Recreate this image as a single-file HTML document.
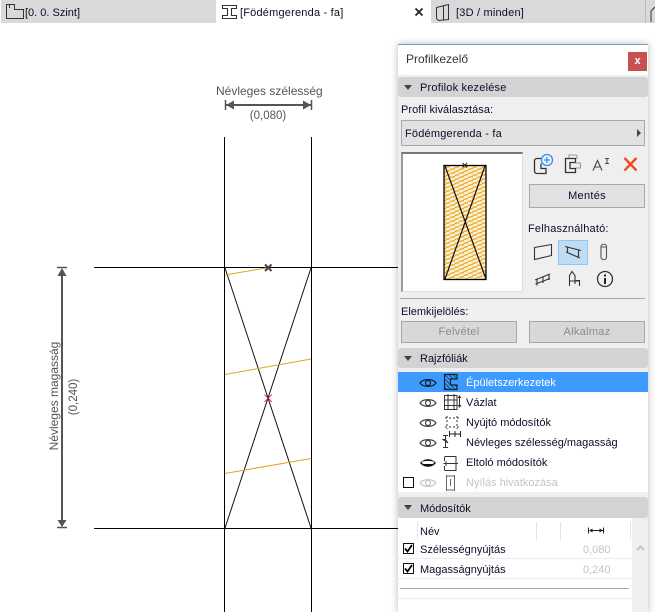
<!DOCTYPE html>
<html><head><meta charset="utf-8">
<style>
html,body{margin:0;padding:0;background:#fff}
#r{position:relative;width:655px;height:612px;overflow:hidden;background:#fff;font-family:"Liberation Sans",sans-serif;font-size:11px;color:#100a28}
.a{position:absolute}
.t{position:absolute;white-space:nowrap;line-height:14px}
.h{position:absolute;left:398px;width:250px;background:#d3d3d3;border-radius:3px}
.tri{position:absolute;left:404px;width:0;height:0;border-left:4px solid transparent;border-right:4px solid transparent;border-top:5px solid #444}
.btn{position:absolute;box-sizing:border-box;border:1px solid #a8a8a8;background:#e1e1e1;text-align:center;line-height:20px}
svg{position:absolute;overflow:visible}
</style></head><body><div id="r">
<div class="a" style="left:1px;top:0;width:215px;height:23px;background:#d9d9d9"></div>
<div class="a" style="left:431px;top:0;width:224px;height:23px;background:#d9d9d9"></div>
<div class="a" style="left:645px;top:0;width:1px;height:23px;background:#bbb"></div>
<div class="t" style="left:25px;top:6px">[0. 0. Szint]</div>
<div class="t" style="left:240px;top:6px;letter-spacing:.2px">[Födémgerenda - fa]</div>
<div class="t" style="left:456px;top:6px;letter-spacing:.2px">[3D / minden]</div>
<svg style="left:0;top:0" width="655" height="30" fill="none" stroke="#333" stroke-width="1">
<path d="M6.500 18.500V4.500H14.500V9.500H23.500V18.500Z"/><path d="M9.500 5V8"/>
<path d="M222.500 5.500H236.500V8.500H231.500V15.500H236.500V18.500H222.500V15.500H227.500V8.500H222.500Z" stroke-width="1.100"/>
<path d="M436.500 7.500L448.500 4.500V19.500L438.500 20.500L436.500 18.500ZM443.500 5.500V19.500"/>
<path d="M415.500 8.500L422.500 15.500M422.500 8.500L415.500 15.500" stroke="#222" stroke-width="1.800"/>
<path d="M651 11L655 7M651 11V22"/>
</svg>

<!-- drawing -->
<div class="t" style="left:216px;top:84px;font-size:12px;color:#555;width:105px;text-align:center">Névleges szélesség</div>
<div class="t" style="left:218px;top:109px;font-size:11.500px;color:#555;width:100px;text-align:center">(0,080)</div>
<svg style="left:0;top:0" width="655" height="612" fill="none">
<path d="M226 105H311" stroke="#555" stroke-width="2"/>
<path d="M225.500 100V110M311.500 100V110" stroke="#555" stroke-width="1.500"/>
<path d="M226 105L234 100.500V109.500Z M311 105L303 100.500V109.500Z" fill="#555"/>
<path d="M62 270V526" stroke="#555" stroke-width="2"/>
<path d="M57 267.500H67M57 527.500H67" stroke="#555" stroke-width="1.500"/>
<path d="M62 268L57.500 276H66.500Z M62 527L57.500 520H66.500Z" fill="#555"/>
<path d="M224.500 137V612M311.500 137V612M94 267.500H398M94 528.500H398" stroke="#000" stroke-width="1"/>
<path d="M225 268L311 528M311 268L225 528" stroke="#111" stroke-width="1"/>
<path d="M225 275L266 268M225 374.500L311 359M225 473.500L311 458.500" stroke="#e0a520" stroke-width="1"/>
<path d="M265 264.500L271.500 271M271.500 264.500L265 271" stroke="#444" stroke-width="2"/>
<path d="M264.500 394.500L272 402M272 394.500L264.500 402" stroke="#e01030" stroke-width=".8"/>
</svg>
<div class="t" style="left:-6px;top:389px;font-size:12px;color:#555;width:120px;text-align:center;transform:rotate(-90deg)">Névleges magasság</div>
<div class="t" style="left:34px;top:390px;font-size:11.500px;color:#555;width:80px;text-align:center;transform:rotate(-90deg)">(0,240)</div>

<!-- panel -->
<div class="a" style="left:398px;top:44px;width:250px;height:568px;background:#efefef;border-top:1px solid #7f9db9;box-sizing:border-box;box-shadow:0 0 7px rgba(0,0,0,.28)"></div>
<div class="a" style="left:398px;top:45px;width:250px;height:30px;background:#fff"></div>
<div class="t" style="left:406px;top:52px;font-size:12px;color:#333">Profilkezelő</div>
<div class="a" style="left:628px;top:52px;width:19px;height:19px;background:#c75050;color:#fff;text-align:center;font:bold 11px/18px 'Liberation Sans',sans-serif">x</div>

<div class="h" style="top:77px;height:20px"></div><div class="tri" style="top:85px"></div>
<div class="t" style="left:420px;top:81px;letter-spacing:.2px">Profilok kezelése</div>
<div class="t" style="left:401px;top:103px;letter-spacing:.05px">Profil kiválasztása:</div>
<div class="a" style="left:401px;top:120px;width:244px;height:26px;box-sizing:border-box;border:1px solid #a8a8a8;background:#e1e1e1"></div>
<div class="t" style="left:405px;top:127px;letter-spacing:.2px">Födémgerenda - fa</div>
<div class="a" style="left:637px;top:129px;width:0;height:0;border-top:4px solid transparent;border-bottom:4px solid transparent;border-left:4px solid #444"></div>

<!-- preview -->
<div class="a" style="left:401px;top:152px;width:122px;height:140px;box-sizing:border-box;background:#fff;border-top:2px solid #777;border-left:2px solid #999;border-right:1px solid #ddd;border-bottom:1px solid #ddd"></div>
<svg style="left:0;top:0" width="655" height="612" fill="none">
<defs><pattern id="w" width="9" height="4" patternUnits="userSpaceOnUse"><rect width="9" height="4" fill="#fbf0d4"/><path d="M0 1.500L5 .5M4.500 3.500L9.500 2.500" stroke="#e8a820" stroke-width="1.300"/></pattern></defs>
<rect x="444" y="165.500" width="42" height="114" fill="url(#w)" stroke="#000" stroke-width="1.300"/>
<path d="M445 166L486 279M485 166L445 279" stroke="#111" stroke-width="1.200"/>
<path d="M462.500 163L467 167.500M467 163L462.500 167.500" stroke="#222" stroke-width="1"/>

<!-- toolbar icons -->
<g stroke="#333" stroke-width="1.300">
<path d="M541 158.500H537C535.500 158.500 534.500 159.500 534.500 161V171C534.500 172.500 535.500 173.500 537 173.500H546V168.500H541V163.500"/>
<circle cx="547" cy="160" r="5.500" stroke="#3b8bf0" fill="#eaf3ff"/>
<path d="M547 157V163M544 160H550" stroke="#3b8bf0"/>
<path d="M575.500 158.500H565.500V172.500H575.500V168.500H570V162.500H575.500Z"/>
<path d="M569 158V155H577M577 155V159M575 163H580.500V168H576" stroke="#999" stroke-width="1.100"/>
</g>
<path d="M593 170.500L597.500 160.500L602 170.500M594.500 167H600.500" stroke="#444" stroke-width="1.100"/>
<path d="M605 158.500H609M607 158.500V163.500M605 163.500H609" stroke="#444" stroke-width="1"/>
<path d="M624.500 158L636.500 170.500M636.500 158L624.500 170.500" stroke="#f04a20" stroke-width="2.400"/>

<!-- usable icons -->
<rect x="558.500" y="240.500" width="29" height="24" fill="#c0dcf3" stroke="#90c5f5"/>
<g stroke="#333" stroke-width="1.100">
<path d="M534.500 247.500L551.500 244.500V255.500L534.500 259.500Z"/>
<path d="M565 246.500L581 250.500M566 252L580 258M567.500 246.500V252.500M578.500 250.500V257.500"/>
<path d="M601 246.500C601 243.500 606.500 243.500 606.500 246.500V257C606.500 260.500 601 260.500 601 257ZM601 247H606.500" stroke="#555"/>
<path d="M535 280L550 274M535.500 284L550 278.500M537 278.500V285.500M543 276.500V283M549 274V280" />
<path d="M569.500 286V275.500L572 271.500L575 275.500V280.500H579.500V286M569.500 281H579.500M575 281V284" />
<circle cx="605" cy="279" r="7.500" stroke-width="1.300"/>
</g>
<path d="M605 278V284M605 274.500V276.500" stroke="#222" stroke-width="2"/>
</svg>

<div class="btn" style="left:529px;top:184px;width:116px;height:24px;line-height:23px;letter-spacing:.3px">Mentés</div>
<div class="t" style="left:528px;top:222px;letter-spacing:.2px">Felhasználható:</div>
<div class="a" style="left:400px;top:298px;width:245px;height:1px;background:#aaa"></div>
<div class="t" style="left:401px;top:305px">Elemkijelölés:</div>
<div class="btn" style="left:401px;top:321px;width:116px;height:22px;line-height:21px;color:#8a8a8a;background:#d8d8d8;letter-spacing:.3px">Felvétel</div>
<div class="btn" style="left:529px;top:321px;width:116px;height:22px;line-height:21px;color:#8a8a8a;background:#d8d8d8;letter-spacing:.3px">Alkalmaz</div>

<div class="h" style="top:348px;height:20px"></div><div class="tri" style="top:356px"></div>
<div class="t" style="left:420px;top:352px">Rajzfóliák</div>

<div class="a" style="left:398px;top:372px;width:250px;height:120px;background:#fff"></div>
<div class="a" style="left:398px;top:372px;width:250px;height:20px;background:#3d9bff"></div>
<div class="t" style="left:466px;top:376px;color:#fff">Épületszerkezetek</div>
<div class="t" style="left:466px;top:396px">Vázlat</div>
<div class="t" style="left:466px;top:416px">Nyújtó módosítók</div>
<div class="t" style="left:466px;top:436px">Névleges szélesség/magasság</div>
<div class="t" style="left:466px;top:456px">Eltoló módosítók</div>
<div class="t" style="left:466px;top:476px;color:#c4c4c4">Nyílás hivatkozása</div>
<svg style="left:0;top:0" width="655" height="612" fill="none">
<defs>
<g id="eye"><path d="M0 0C3 -4.500 13 -4.500 16 0C13 4.500 3 4.500 0 0Z"/><circle cx="8" cy="0" r="2.500"/></g>
<pattern id="hb" width="3" height="3" patternUnits="userSpaceOnUse" patternTransform="rotate(45)"><rect width="3" height="3" fill="#3d9bff"/><path d="M0 1.500H3" stroke="#164a80"/></pattern>
</defs>
<g stroke="#444" stroke-width="1.200">
<use href="#eye" x="420" y="383" stroke="#123"/>
<use href="#eye" x="420" y="403"/>
<use href="#eye" x="420" y="423"/>
<use href="#eye" x="420" y="443"/>
<use href="#eye" x="420" y="483" stroke="#c8c8c8"/>
</g>
<path d="M420 463C424 458 432 458 436 463C432 468 424 468 420 463Z" fill="#111"/>
<path d="M421.500 462C425 460.500 431 460.500 434.500 462L433 464H423Z" fill="#fff"/>
<rect x="403.500" y="477.500" width="10" height="10" stroke="#111" stroke-width="1"/>
<path d="M457 374.500H444.500V389.500H457V385H450.500V379H457Z" fill="url(#hb)" stroke="#123" stroke-width="1.200"/>
<path d="M444 395.500H457M444 400H457M444 405.500H457M448 394V410M454 394V410M444.500 395V409.500H457V395" stroke="#333" stroke-width="1"/>
<path d="M459.500 397V406M458 398L459.500 396L461 398M458 405L459.500 407L461 405" stroke="#333"/>
<path d="M445 418H459M445 427H459M447 416V429M457 416V429" stroke="#333" stroke-dasharray="2 2"/>
<path d="M445.500 435.500V447.500M443 435.500H448M443 447.500H448M448 443L445.500 439.500H443Z" stroke="#333"/>
<path d="M449 434H460M449.500 431V437M455 431V437M460.500 431V437" stroke="#222"/>
<path d="M445 456.500H456V461M445 470.500H456V466M444.500 456.500V461M444.500 466V470.500M443.500 463.500H458M446 461V466M456 461V466" stroke="#333"/>
<path d="M446.500 475V491M454.500 475V491M447 476H454M447 490H454M450.500 479V486" stroke="#666"/>
</svg>

<div class="h" style="top:497px;height:21px"></div><div class="tri" style="top:505px"></div>
<div class="t" style="left:420px;top:502px">Módosítók</div>

<div class="a" style="left:398px;top:518px;width:234px;height:94px;background:#fff"></div>
<div class="a" style="left:417px;top:522px;width:1px;height:18px;background:#e4e4e4"></div>
<div class="a" style="left:536px;top:522px;width:1px;height:18px;background:#e4e4e4"></div>
<div class="a" style="left:560px;top:522px;width:1px;height:18px;background:#e4e4e4"></div>
<div class="a" style="left:630px;top:522px;width:1px;height:18px;background:#e4e4e4"></div>
<div class="t" style="left:420px;top:525px">Név</div>
<svg style="left:0;top:0" width="655" height="612" fill="none">
<path d="M588.500 527.500V533.500M603 530.500H591M603.500 527.500V533.500" stroke="#222"/>
<path d="M589 530.500L592.500 528.500V532.500ZM603 530.500L599.500 528.500V532.500Z" fill="#222"/>
<path d="M637 550L640.500 546.500L644 550" stroke="#c4c4c4" stroke-width="2"/>
<rect x="403.500" y="543.500" width="10" height="10" stroke="#111" fill="#fff"/>
<path d="M405 548.500L407.500 551.500L412 545" stroke="#000" stroke-width="1.800"/>
<rect x="403.500" y="563.500" width="10" height="10" stroke="#111" fill="#fff"/>
<path d="M405 568.500L407.500 571.500L412 565" stroke="#000" stroke-width="1.800"/>
</svg>
<div class="t" style="left:420px;top:543px">Szélességnyújtás</div>
<div class="t" style="left:420px;top:563px">Magasságnyújtás</div>
<div class="t" style="left:583px;top:543px;color:#c4c4c4">0,080</div>
<div class="t" style="left:583px;top:563px;color:#c4c4c4">0,240</div>
<div class="a" style="left:398px;top:558px;width:234px;height:1px;background:#ececec"></div>
<div class="a" style="left:398px;top:578px;width:234px;height:1px;background:#ececec"></div>
<div class="a" style="left:400px;top:588px;width:229px;height:1px;background:#a5a5a5"></div>
<div class="a" style="left:398px;top:598px;width:234px;height:1px;background:#ececec"></div>
</div></body></html>
